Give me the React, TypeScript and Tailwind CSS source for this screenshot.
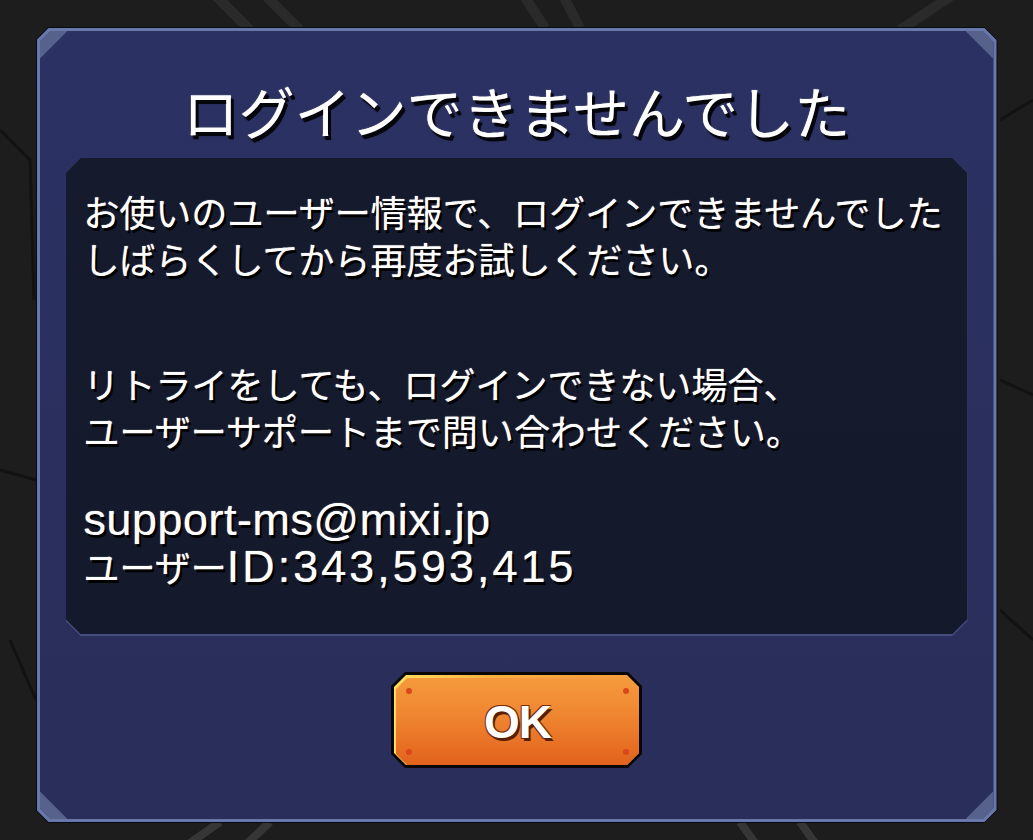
import React from 'react';

const jp = { fontFamily: '"Noto Sans CJK JP", "Noto Sans", sans-serif' };
const latin = { fontFamily: '"Liberation Sans", Arial, "Noto Sans CJK JP", sans-serif' };

const Background = () => (
    <svg className="absolute inset-0 w-full h-full" viewBox="0 0 1033 840" preserveAspectRatio="none">
        {/* diagonal streaks at the top */}
        <g stroke="#2a2a2a" strokeWidth="10" fill="none">
            <path d="M210 -10 L250 30" />
            <path d="M260 -10 L300 30" />
            <path d="M520 -10 L545 28" />
            <path d="M560 -10 L580 28" />
            <path d="M900 30 L960 -10" />
        </g>
        {/* faint cell lines at the sides */}
        <g stroke="#121212" strokeWidth="3" fill="none">
            <path d="M0 130 L30 160 L34 300" />
            <path d="M0 470 L36 480" />
            <path d="M10 640 L36 700" />
            <path d="M1000 120 L1033 100" />
            <path d="M1000 380 L1033 395" />
            <path d="M1000 610 L1033 640" />
        </g>
        <g stroke="#363636" strokeWidth="8" fill="none">
            <path d="M180 850 L220 822" />
            <path d="M240 850 L270 822" />
            <path d="M760 850 L740 822" />
            <path d="M820 850 L800 822" />
        </g>
    </svg>
);

const OkButton = () => (
    <button className="relative w-[251px] h-[96px] bg-[#0a0604] p-[3px] [clip-path:polygon(14px_0,calc(100%_-_14px)_0,100%_14px,100%_calc(100%_-_14px),calc(100%_-_14px)_100%,14px_100%,0_calc(100%_-_14px),0_14px)]">
        <div className="relative w-full h-full bg-[linear-gradient(to_right,#ffe060,#f7b040_40%,#f39a3a)] pt-[3px] pl-[2px] [clip-path:polygon(12px_0,calc(100%_-_12px)_0,100%_12px,100%_calc(100%_-_12px),calc(100%_-_12px)_100%,12px_100%,0_calc(100%_-_12px),0_12px)]">
            <div className="relative w-full h-full flex items-center justify-center bg-[linear-gradient(to_bottom,#f59a3c,#ef8430_45%,#e2621c)] [clip-path:polygon(11px_0,calc(100%_-_11px)_0,100%_11px,100%_calc(100%_-_11px),calc(100%_-_11px)_100%,11px_100%,0_calc(100%_-_11px),0_11px)]">
                <span className="absolute left-[10px] top-[10px] w-[6px] h-[6px] rounded-full bg-[#d8481c]" />
                <span className="absolute right-[10px] top-[10px] w-[6px] h-[6px] rounded-full bg-[#d8481c]" />
                <span className="absolute left-[10px] bottom-[10px] w-[6px] h-[6px] rounded-full bg-[#d8481c]" />
                <span className="absolute right-[10px] bottom-[10px] w-[6px] h-[6px] rounded-full bg-[#d8481c]" />
                <span
                    className="text-white font-bold text-[46px] leading-none tracking-[-1px] [text-shadow:2px_3px_0_#5a1e04,-1px_-1px_0_#7a3008,1px_-1px_0_#7a3008,-1px_1px_0_#7a3008]"
                    style={latin}
                >
                    OK
                </span>
            </div>
        </div>
    </button>
);

export default function App() {
    return (
        <div className="relative w-full h-[840px] bg-[#1d1d1d] overflow-hidden flex items-start justify-center" style={jp}>
            <Background />

            {/* Dialog */}
            <div className="relative mt-[27px] w-[962px] h-[796px] bg-[#080a12] p-[1px] [clip-path:polygon(13px_0,calc(100%_-_13px)_0,100%_13px,100%_calc(100%_-_13px),calc(100%_-_13px)_100%,13px_100%,0_calc(100%_-_13px),0_13px)]">
                <div className="w-full h-full bg-[#6878aa] p-[3px] [clip-path:polygon(12px_0,calc(100%_-_12px)_0,100%_12px,100%_calc(100%_-_12px),calc(100%_-_12px)_100%,12px_100%,0_calc(100%_-_12px),0_12px)]">
                    <div className="relative w-full h-full flex flex-col items-center bg-[linear-gradient(to_bottom,#2b3263,#2a2f5e_50%,#2a2e5a)] [clip-path:polygon(11px_0,calc(100%_-_11px)_0,100%_11px,100%_calc(100%_-_11px),calc(100%_-_11px)_100%,11px_100%,0_calc(100%_-_11px),0_11px)]">
                        {/* corner accents */}
                        <div className="absolute left-0 top-0 w-[28px] h-[28px] bg-[#56618c] [clip-path:polygon(0_0,100%_0,0_100%)]" />
                        <div className="absolute right-0 top-0 w-[28px] h-[28px] bg-[#56618c] [clip-path:polygon(0_0,100%_0,100%_100%)]" />
                        <div className="absolute left-0 bottom-0 w-[28px] h-[28px] bg-[#56618c] [clip-path:polygon(0_0,100%_100%,0_100%)]" />
                        <div className="absolute right-0 bottom-0 w-[28px] h-[28px] bg-[#56618c] [clip-path:polygon(100%_0,100%_100%,0_100%)]" />

                        {/* Title */}
                        <h1 className="mt-[47px] h-[64px] leading-[64px] text-[56px] font-normal text-white [text-shadow:3px_4px_0_#05060c,2px_3px_2px_#000,0_0_1px_#fff]">
                            ログインできませんでした
                        </h1>

                        {/* Message panel */}
                        <div className="mt-[16px] w-[902px] h-[478px] bg-[#454d7e] pb-[2px] [clip-path:polygon(15px_0,calc(100%_-_15px)_0,100%_15px,100%_calc(100%_-_15px),calc(100%_-_15px)_100%,15px_100%,0_calc(100%_-_15px),0_15px)]">
                            <div className="w-full h-full bg-[linear-gradient(to_bottom,#151a2c,#141a2b)] pt-[30px] pl-[18px] text-white text-[36px] leading-[47px] font-normal [text-shadow:2px_3px_0_#000,0_0_1px_#fff] [clip-path:polygon(15px_0,calc(100%_-_15px)_0,100%_15px,100%_calc(100%_-_15px),calc(100%_-_15px)_100%,15px_100%,0_calc(100%_-_15px),0_15px)]">
                                <p>お使いのユーザー情報で、ログインできませんでした</p>
                                <p>しばらくしてから再度お試しください。</p>
                                <p className="mt-[78px]">リトライをしても、ログインできない場合、</p>
                                <p>ユーザーサポートまで問い合わせください。</p>
                                <p className="mt-[42px]">
                                    <span className="text-[45px] tracking-[0.5px]" style={latin}>support-ms@mixi.jp</span>
                                </p>
                                <p>
                                    ユーザー<span className="text-[45px] tracking-[3px]" style={latin}>ID:343,593,415</span>
                                </p>
                            </div>
                        </div>

                        <div className="mt-[36px]">
                            <OkButton />
                        </div>
                    </div>
                </div>
            </div>
        </div>
    );
}
